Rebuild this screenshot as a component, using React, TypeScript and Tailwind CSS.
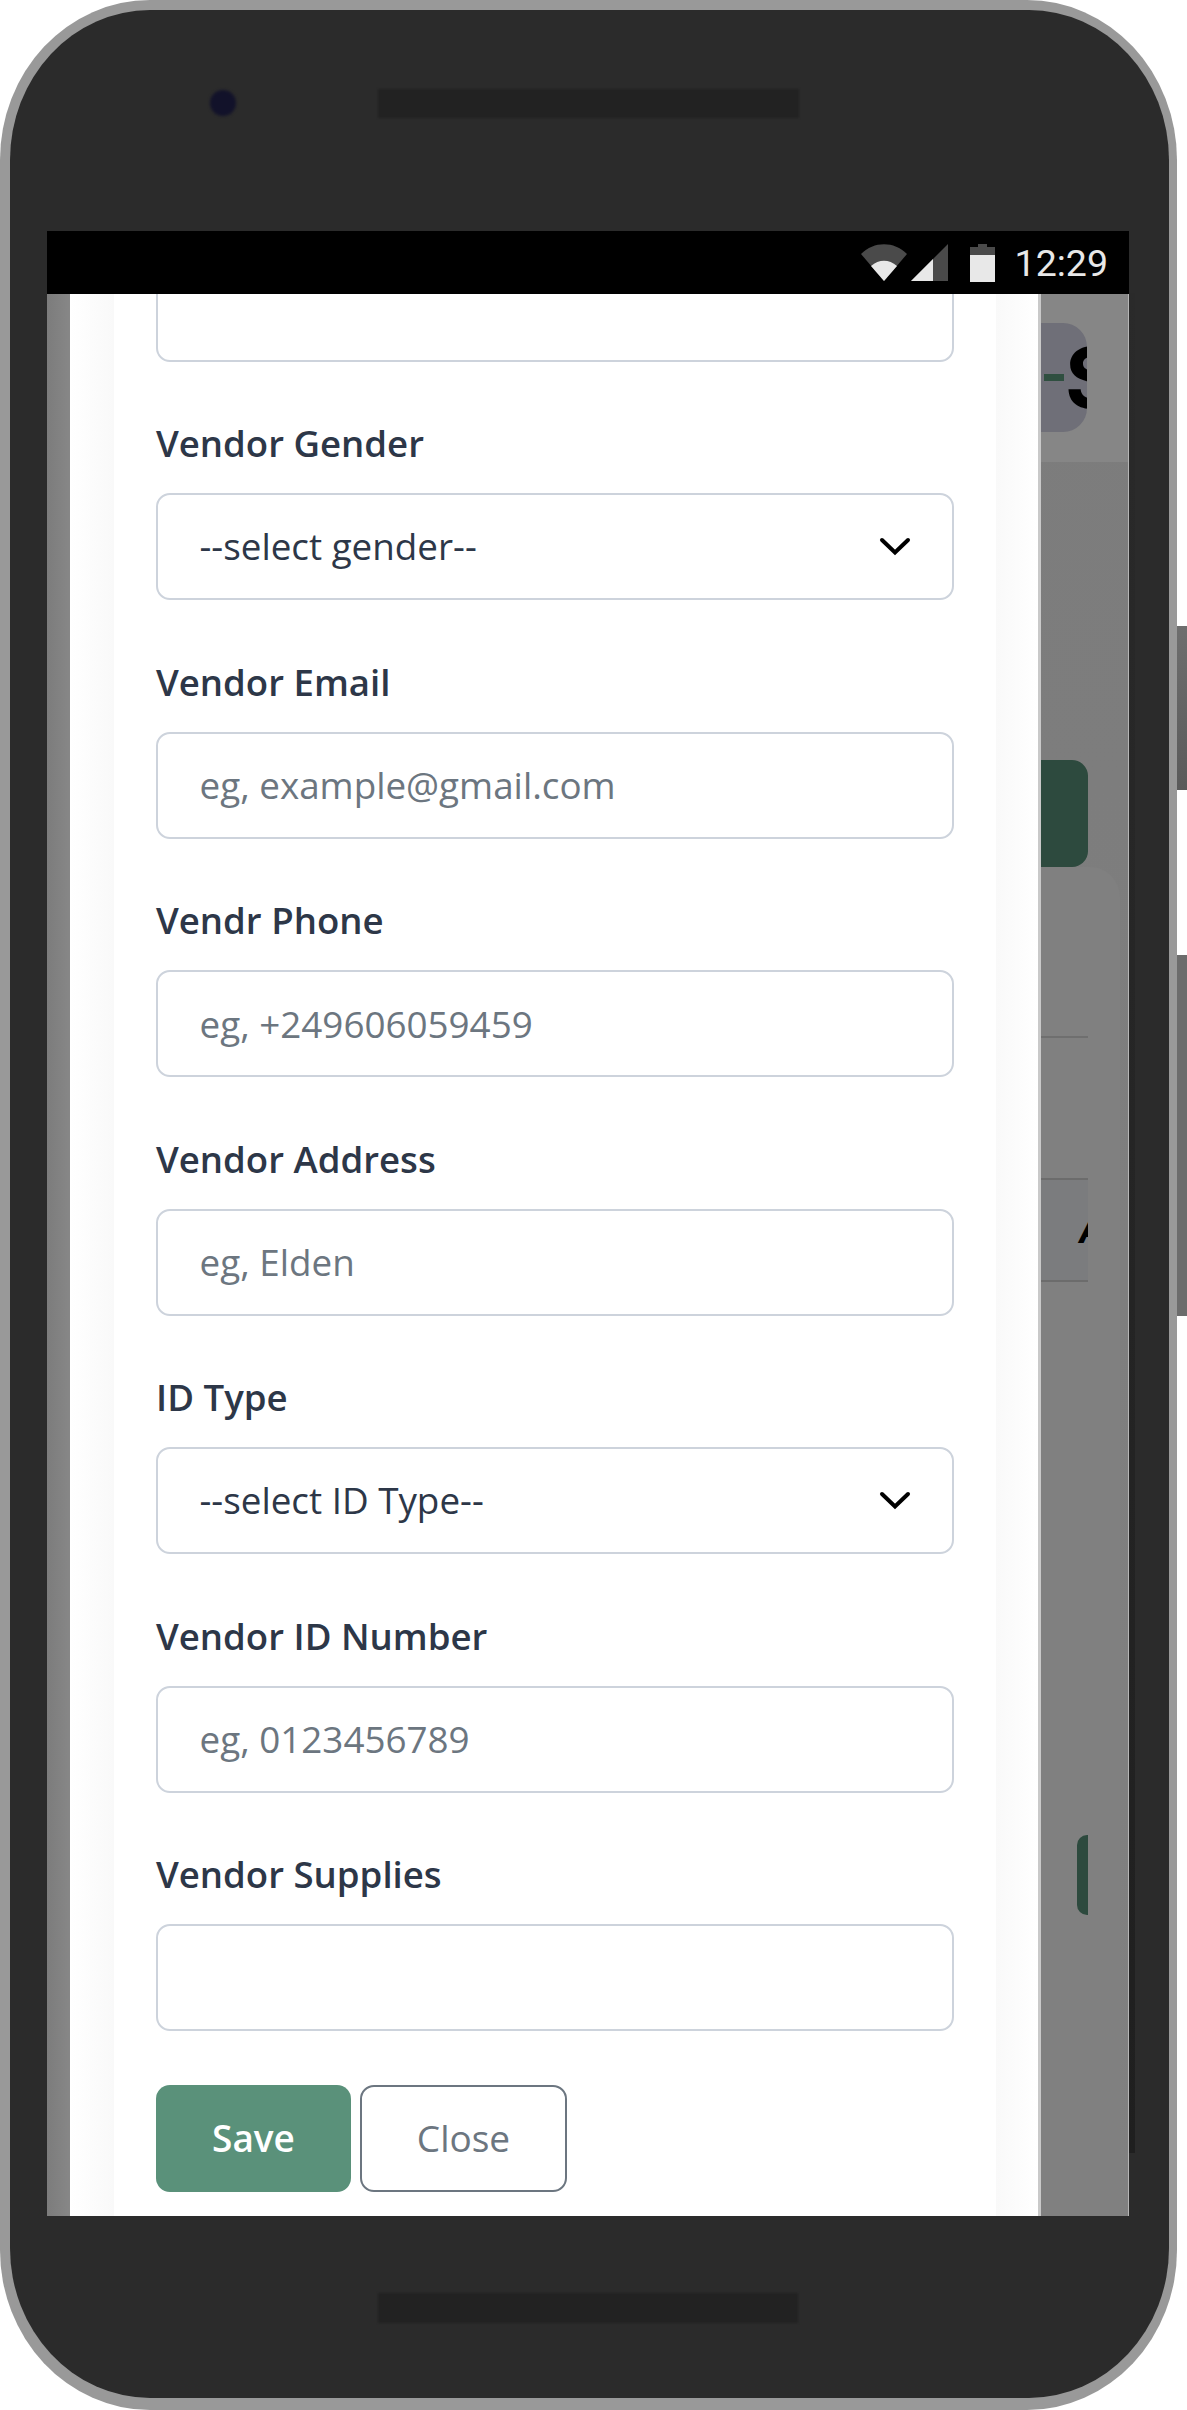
import { ReactNode } from "react";

const sans = "font-['Open_Sans',sans-serif]";

function Chevron() {
  return (
    <svg
      className="pointer-events-none absolute right-[41px] top-[42px] h-[22px] w-[36px]"
      viewBox="0 0 36 22"
      fill="none"
      stroke="#000"
      strokeWidth="4"
      strokeLinecap="round"
    >
      <path d="M5 5l13 12.5L31 5" />
    </svg>
  );
}

function Field({ label, children }: { label: string; children: ReactNode }) {
  return (
    <div>
      <label className="mb-[23px] block text-[36.6px] font-semibold leading-[54px] text-[#2d3748]">{label}</label>
      <div className="relative">{children}</div>
    </div>
  );
}

function TextInput({ placeholder }: { placeholder?: string }) {
  return (
    <input
      placeholder={placeholder}
      className="block h-[107px] w-full rounded-[14px] border-[2.5px] border-[#cdd3dc] bg-white px-[41.5px] text-[36.8px] text-[#2d3748] outline-none placeholder:text-[#6c7680] placeholder:opacity-100"
    />
  );
}

function SelectInput({ label }: { label: string }) {
  return (
    <>
      <select className="block h-[107px] w-full appearance-none rounded-[14px] border-[2.5px] border-[#cdd3dc] bg-white px-[41.5px] text-[36.8px] text-[#2d3748] outline-none">
        <option>{label}</option>
      </select>
      <Chevron />
    </>
  );
}

function Wifi() {
  return (
    <svg className="h-[38px] w-[46px]" viewBox="0 0 46 38">
      <path d="M0 10C13-3 33-3 46 10L23 37Z" fill="#4a4a4a" />
      <path d="M10 22c8-7 18-7 26 0L23 37Z" fill="#e8e8e8" />
    </svg>
  );
}

function Signal() {
  return (
    <svg className="ml-[4px] h-[37px] w-[37px]" viewBox="0 0 37 37">
      <path d="M0 37L37 0v37Z" fill="#4a4a4a" />
      <path d="M0 37L22 15v22Z" fill="#e8e8e8" />
    </svg>
  );
}

function Battery() {
  return (
    <svg className="ml-[22px] h-[38px] w-[25px]" viewBox="0 0 25 38">
      <path d="M8 0h9v3h8v8H0V3h8Z" fill="#4a4a4a" />
      <path d="M0 11h25v27H0Z" fill="#e8e8e8" />
    </svg>
  );
}

function Backdrop() {
  return (
    <div className="flex w-[91px] shrink-0 flex-col overflow-hidden border-l-[3px] border-r border-l-[#c9c9c9] border-r-[#b5b5b5] bg-gradient-to-b from-[#7c7c7c] to-[#808080]">
      {/* page header behind the dialog */}
      <div className="h-[168px] shrink-0 bg-[#868686] pt-[29px]">
        <div className="flex h-[109px] w-[46px] items-center overflow-hidden rounded-r-[24px] bg-[#6f6f78]">
          <div className="ml-[3px] h-[7px] w-[20px] shrink-0 bg-[#2f4f40]" />
          <span className="ml-[1px] font-['Inter',sans-serif] text-[84px] font-bold leading-none text-black">S</span>
        </div>
      </div>
      <div className="mt-[298px] h-[107px] w-[47px] shrink-0 rounded-r-[16px] bg-[#2d4a3e]" />
      {/* table card */}
      <div className="w-[79px] flex-1 rounded-tr-[30px] bg-[#808080] pt-[169px]">
        <div className="h-[2px] w-[47px] bg-[#6f6f6f]" />
        <div className="mt-[140px] flex h-[104px] w-[47px] items-center justify-end overflow-hidden border-y-[2px] border-[#6c6c6c] bg-[#7b7c7e]">
          <span className="-mr-[16px] font-['Inter',sans-serif] text-[34px] font-bold italic text-black">A</span>
        </div>
        <div className="ml-[36px] mt-[553px] h-[80px] w-[11px] rounded-l-[10px] bg-[#2d4a3e]" />
      </div>
    </div>
  );
}

export default function App() {
  return (
    <div className={`relative h-[2410px] w-[1187px] overflow-hidden bg-white ${sans}`}>
      {/* side buttons */}
      <div className="absolute right-0 top-[626px] h-[164px] w-[10px] bg-gradient-to-b from-[#6e6e6e] to-[#5a5a5a]" />
      <div className="absolute right-0 top-[955px] h-[361px] w-[10px] bg-[#6c6c6c]" />

      <div className="h-full w-[1177px] rounded-[150px/160px] bg-[#999999] pb-[12px] pl-[10px] pr-[8px] pt-[10px]">
        <div className="flex h-full flex-col rounded-[140px/150px] bg-[#2b2b2b] pl-[37px] pr-[40px]">
          {/* camera and speaker */}
          <div className="flex h-[221px] shrink-0 items-start pl-[163px] pt-[79px]">
            <div className="mt-[1px] h-[26px] w-[26px] rounded-full bg-[#12122a] blur-[1.5px]" />
            <div className="ml-[142px] h-[29px] w-[421px] bg-[#222222] blur-[1px]" />
          </div>

          {/* screen */}
          <div className="relative flex h-[1985px] shrink-0 flex-col">
            <div className="absolute -right-[6px] top-[62px] h-[1860px] w-[6px] bg-gradient-to-b from-[#2a2a2a] to-[#1f1f1f]" />
            <div className="flex h-[63px] shrink-0 items-center justify-end bg-black pr-[21px]">
              <Wifi />
              <Signal />
              <Battery />
              <span className="ml-[20px] mt-[3px] font-['Roboto',sans-serif] text-[37.5px] leading-none text-[#e8e8e8]">12:29</span>
            </div>
            <div className="flex min-h-0 flex-1 overflow-hidden">
              <div className="w-[23px] shrink-0 bg-gradient-to-r from-[#7c7c7c] to-[#878787]" />
              {/* dialog */}
              <div className="flex w-[968px] shrink-0 bg-white">
                <div className="w-[44px] shrink-0 bg-gradient-to-r from-white to-[#f9f9f9]" />
                <div className="w-[882px] shrink-0 px-[42px]">
                  <div className="-mt-[39.5px] flex flex-col gap-[54.5px]">
                    <TextInput />
                    <Field label="Vendor Gender">
                      <SelectInput label="--select gender--" />
                    </Field>
                    <Field label="Vendor Email">
                      <TextInput placeholder="eg, example@gmail.com" />
                    </Field>
                    <Field label="Vendr Phone">
                      <TextInput placeholder="eg, +249606059459" />
                    </Field>
                    <Field label="Vendor Address">
                      <TextInput placeholder="eg, Elden" />
                    </Field>
                    <Field label="ID Type">
                      <SelectInput label="--select ID Type--" />
                    </Field>
                    <Field label="Vendor ID Number">
                      <TextInput placeholder="eg, 0123456789" />
                    </Field>
                    <Field label="Vendor Supplies">
                      <TextInput />
                    </Field>
                  </div>
                  <div className="mt-[54px] flex gap-[9px]">
                    <button className="h-[107px] w-[195px] rounded-[14px] bg-[#5a917a] pb-[2px] text-[37px] font-[550] text-white">
                      Save
                    </button>
                    <button className="h-[107px] w-[207px] rounded-[14px] border-[2px] border-[#6c7680] bg-white pb-[2px] text-[37px] font-medium text-[#6c7680]">
                      Close
                    </button>
                  </div>
                </div>
                <div className="w-[42px] shrink-0 bg-gradient-to-r from-[#f9f9f9] to-white" />
              </div>
              <Backdrop />
            </div>
          </div>

          {/* bottom speaker */}
          <div className="flex flex-1 items-start pl-[331px] pt-[77px]">
            <div className="h-[30px] w-[420px] bg-[#222222] blur-[1px]" />
          </div>
        </div>
      </div>
    </div>
  );
}
